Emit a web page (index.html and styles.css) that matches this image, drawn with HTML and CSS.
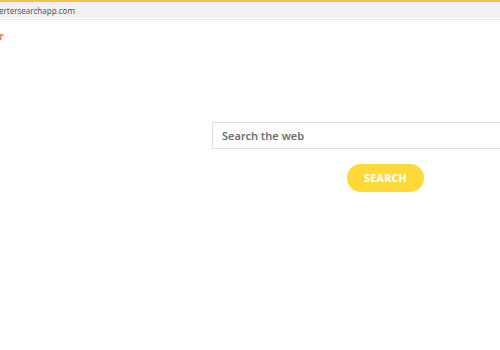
FILE: index.html
```html
<!DOCTYPE html>
<html lang="en">
<head>
    <meta charset="UTF-8">
    <title>Search</title>
    <link rel="stylesheet" href="styles.css">
</head>
<body>
    <header class="browser-bar">
        <span class="browser-url">ertersearchapp.com</span>
    </header>

    <div class="brand">r</div>

    <main class="search-area">
        <form class="search-form">
            <input type="text" class="search-input" placeholder="Search the web">
            <button type="submit" class="search-button">SEARCH</button>
        </form>
    </main>
</body>
</html>
```

FILE: styles.css
```css
/* --- Variables --- */
:root {
    --font-body: 'Noto Sans', 'Open Sans', sans-serif;
    --color-accent: #f4c245;
    --color-button: #ffd937;
    --color-brand: #f7824a;
    --color-bar: #f1f2f4;
    --color-border: #dedede;
    --color-text: #707070;
}

* { box-sizing: border-box; }
html, body { height: 100%; }
body {
    margin: 0;
    font-family: var(--font-body);
    background: #ffffff;
    overflow: hidden;
}

/* --- Browser bar --- */
.browser-bar {
    height: 20px;
    border-top: 2px solid var(--color-accent);
    border-bottom: 1px solid #e6e6e6;
    background: linear-gradient(var(--color-bar) 0 16px, #ffffff 16px);
    display: flex;
    align-items: flex-start;
    padding-top: 3px;
}
.browser-url { font-size: 8px; color: #555; line-height: 12px; margin-left: -1px; }

/* --- Brand --- */
.brand {
    margin-top: 10px;
    margin-left: -1px;
    font-size: 11px;
    font-weight: 700;
    color: var(--color-brand);
    line-height: 12px;
}

/* --- Search --- */
.search-area { margin-left: 212px; width: 347px; padding-top: 80px; }
.search-form { display: flex; flex-direction: column; align-items: center; gap: 15px; }
.search-input {
    width: 100%;
    height: 27px;
    border: 1px solid var(--color-border);
    padding: 0 9px;
    font-family: var(--font-body);
    font-size: 11px;
    font-weight: 600;
    color: var(--color-text);
    outline: none;
}
.search-input::placeholder { color: var(--color-text); }
.search-button {
    width: 77px;
    height: 28px;
    border: none;
    border-radius: 14px;
    background: var(--color-button);
    color: #ffffff;
    font-family: var(--font-body);
    font-size: 10.5px;
    font-weight: 800;
    letter-spacing: 0.3px;
    cursor: pointer;
}
```
